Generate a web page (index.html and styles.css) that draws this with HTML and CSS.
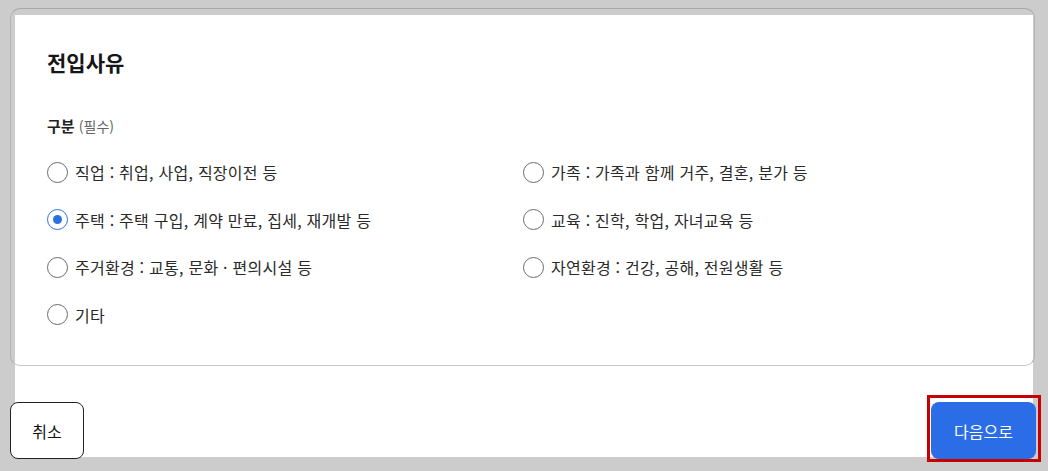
FILE: index.html
```html
<!DOCTYPE html>
<html lang="ko">
<head>
<meta charset="utf-8">
<title>전입사유</title>
<link rel="stylesheet" href="styles.css">
</head>
<body>
<div class="sheet">
  <section class="card">
    <h1 class="title">전입사유</h1>
    <div class="field-label"><strong>구분</strong> <span class="req">(필수)</span></div>
    <div class="options">
      <label class="option"><span class="radio"></span><span class="opt-text">직업 : 취업, 사업, 직장이전 등</span></label>
      <label class="option"><span class="radio"></span><span class="opt-text">가족 : 가족과 함께 거주, 결혼, 분가 등</span></label>
      <label class="option"><span class="radio checked"></span><span class="opt-text">주택 : 주택 구입, 계약 만료, 집세, 재개발 등</span></label>
      <label class="option"><span class="radio"></span><span class="opt-text">교육 : 진학, 학업, 자녀교육 등</span></label>
      <label class="option"><span class="radio"></span><span class="opt-text">주거환경 : 교통, 문화 · 편의시설 등</span></label>
      <label class="option"><span class="radio"></span><span class="opt-text">자연환경 : 건강, 공해, 전원생활 등</span></label>
      <label class="option"><span class="radio"></span><span class="opt-text">기타</span></label>
    </div>
  </section>
  <div class="footer">
    <button class="btn btn-cancel" type="button">취소</button>
    <span class="highlight"><button class="btn btn-next" type="button">다음으로</button></span>
  </div>
</div>
</body>
</html>
```

FILE: styles.css
```css
html, body {
  margin: 0;
  padding: 0;
}
body {
  background: #cccccc;
  font-family: "Noto Sans CJK KR", "Noto Sans", sans-serif;
  color: #222;
  width: 1048px;
  height: 471px;
  overflow: hidden;
}
.sheet {
  margin: 15px 15px 0 15px;
  height: 442px;
  background: #ffffff;
  display: flex;
  flex-direction: column;
}
.card {
  flex: none;
  box-sizing: border-box;
  margin: -7px -2px 0 -5px;
  height: 358px;
  border: 1px solid #b4b4b4;
  border-top-color: #a8a8a8;
  border-bottom-color: #c6c6c6;
  border-radius: 10px;
  padding: 39px 35px 0 36px;
}
.title {
  margin: 0;
  font-size: 21px;
  line-height: 28px;
  font-weight: 700;
  color: #161616;
}
.field-label {
  margin-top: 39px;
  font-size: 15px;
  line-height: 22px;
  color: #222;
}
.field-label strong {
  font-weight: 700;
}
.req {
  font-size: 14px;
  color: #666;
}
.options {
  margin-top: 23px;
  display: grid;
  grid-template-columns: 1fr 1fr;
  row-gap: 23.5px;
}
.option {
  display: flex;
  align-items: center;
  height: 24px;
  gap: 7px;
}
.radio {
  box-sizing: border-box;
  width: 21px;
  height: 21px;
  border: 1px solid #6a6a6a;
  border-radius: 50%;
  display: flex;
  align-items: center;
  justify-content: center;
  flex: none;
}
.radio.checked {
  border-color: #2d6fe0;
}
.radio.checked::after {
  content: "";
  width: 9px;
  height: 9px;
  border-radius: 50%;
  background: #2d6fe0;
}
.opt-text {
  font-size: 16px;
  letter-spacing: 0.25px;
  color: #2a2a2a;
  line-height: 24px;
}
.footer {
  flex: none;
  display: flex;
  justify-content: space-between;
  align-items: flex-start;
  margin: 29px -8px 0 -5px;
}
.btn {
  font-family: "Noto Sans CJK KR", "Noto Sans", sans-serif;
  font-size: 16px;
  border-radius: 8px;
  height: 57px;
  cursor: pointer;
}
.btn-cancel {
  margin-top: 7px;
  width: 74px;
  background: #ffffff;
  border: 1px solid #222;
  color: #111;
}
.highlight {
  display: block;
  border: 3px solid #c80000;
  padding: 4px 2px 0 1px;
}
.btn-next {
  display: block;
  width: 105px;
  background: #2a6de6;
  border: none;
  color: #ffffff;
}
```
